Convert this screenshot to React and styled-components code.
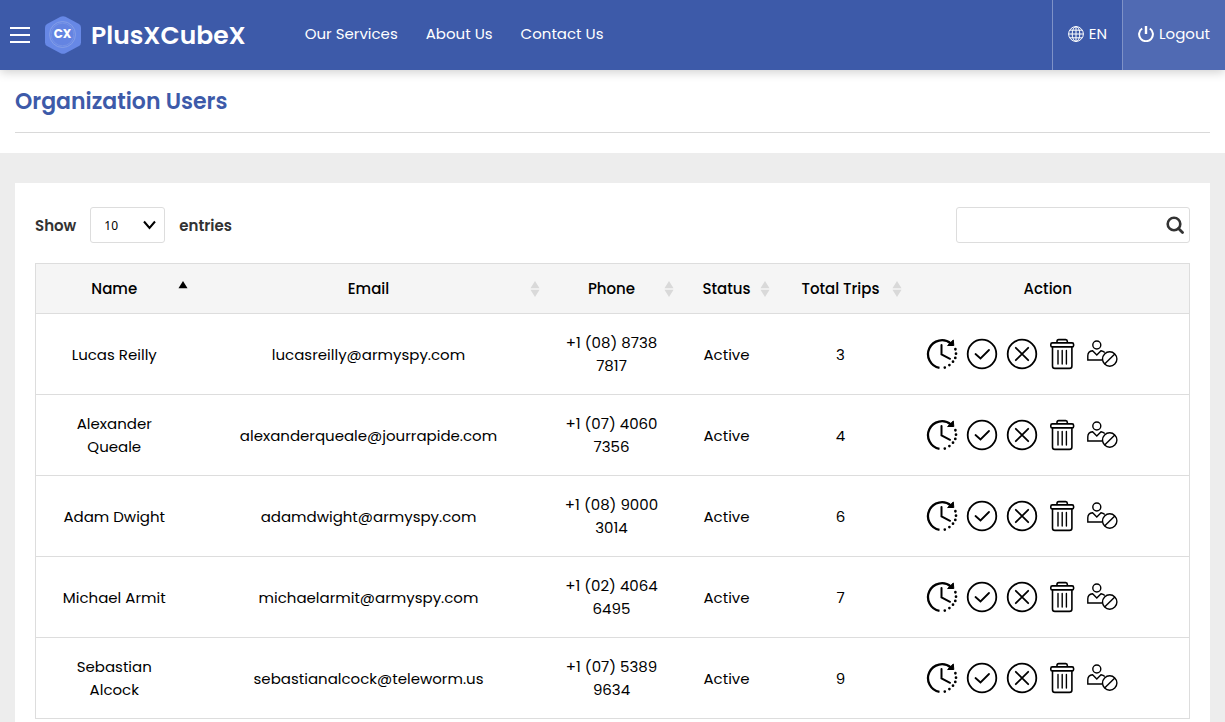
import { useState } from "react";
import styled, { createGlobalStyle } from "styled-components";

const GlobalStyle = createGlobalStyle`
  * {
    box-sizing: border-box;
  }
  body {
    margin: 0;
    background-color: #ededed;
    color: #000;
    font-family: Poppins, Inter, "Open Sans", sans-serif;
    font-size: 15px;
    line-height: 23px;
  }
  button, input {
    font: inherit;
    color: inherit;
  }
`;

const Header = styled.header`
  position: relative;
  display: flex;
  align-items: center;
  height: 70px;
  padding-left: 10px;
  background-color: #3d5aa9;
  color: white;
  box-shadow: 0 2px 10px rgba(0, 0, 0, 0.2);
`;
const MenuButton = styled.button`
  display: flex;
  flex-direction: column;
  gap: 5px;
  width: 20px;
  padding: 0;
  border: none;
  background: none;
  cursor: pointer;
`;
const MenuLine = styled.span`
  width: 100%;
  height: 2px;
  background-color: white;
`;
const Brand = styled.a`
  display: flex;
  align-items: center;
  gap: 10px;
  margin-left: 15px;
  color: white;
  font-size: 25px;
  font-weight: 600;
  text-decoration: none;
`;
const Nav = styled.nav`
  display: flex;
  gap: 28px;
  margin-left: 59px;
  padding-bottom: 3px;
`;
const NavLink = styled.a`
  color: white;
  text-decoration: none;
`;
const HeaderActions = styled.div`
  display: flex;
  align-self: stretch;
  margin-left: auto;
`;
const HeaderButton = styled.button`
  display: flex;
  align-items: center;
  gap: 5px;
  padding: 0 15px 3px;
  border: none;
  border-left: 1px solid #7f92c7;
  background-color: ${(props) => (props.$filled ? "#506ab3" : "transparent")};
  cursor: pointer;
`;

const TitleBar = styled.div`
  padding: 0 15px 20px;
  background-color: white;
`;
const Title = styled.h1`
  margin: 0;
  padding: 16px 0 15px;
  border-bottom: 1px solid #d9d9d9;
  color: #3d5aa9;
  font-size: 22px;
  font-weight: 600;
  line-height: 31px;
`;

const Card = styled.main`
  margin: 30px 15px;
  padding: 24px 20px;
  background-color: white;
`;
const Controls = styled.div`
  display: flex;
  align-items: center;
  justify-content: space-between;
  margin-bottom: 20px;
`;
const LengthLabel = styled.label`
  display: flex;
  align-items: center;
  gap: 14px;
  color: #333;
  font-weight: 600;
`;
const SelectBox = styled.span`
  position: relative;
  display: flex;
`;
const Select = styled.select`
  appearance: none;
  width: 75px;
  height: 36px;
  padding: 0 13px;
  border: 1px solid #ddd;
  border-radius: 3px;
  background-color: white;
  color: #000;
  font-family: "Noto Sans", sans-serif;
  font-size: 12px;
`;
const SelectArrow = styled.svg`
  position: absolute;
  top: 13px;
  right: 9px;
  pointer-events: none;
`;
const SearchBox = styled.div`
  position: relative;
  width: 234px;
`;
const SearchInput = styled.input`
  display: block;
  width: 100%;
  height: 36px;
  padding: 0 34px 0 12px;
  border: 1px solid #ddd;
  border-radius: 3px;
`;
const SearchIcon = styled.svg`
  position: absolute;
  top: 9px;
  right: 6px;
  pointer-events: none;
`;

const Table = styled.table`
  width: 100%;
  table-layout: fixed;
  border-collapse: collapse;
  border: 1px solid #ddd;
  text-align: center;
`;
const Col = styled.col`
  width: ${(props) => props.$width};
`;
const HeadRow = styled.tr`
  height: 50px;
  background-color: #f5f5f5;
`;
const HeadCell = styled.th`
  position: relative;
  padding: 0;
  font-weight: 500;
`;
const SortButton = styled.button`
  width: 100%;
  padding: 13px 0;
  border: none;
  background: none;
  cursor: pointer;
`;
const SortIcon = styled.svg`
  position: absolute;
  top: 17px;
  right: 5px;
`;
const Row = styled.tr`
  height: 81px;
  border-top: 1px solid #ddd;
`;
const Cell = styled.td`
  padding: 17px 20px;
`;
const Actions = styled.div`
  display: flex;
  gap: 10px;
`;
const IconButton = styled.button`
  width: 30px;
  height: 30px;
  padding: 0;
  border: none;
  background: none;
  cursor: pointer;

  svg {
    display: block;
    overflow: visible;
  }
`;

const columns = [
  { name: "Name", width: "157px" },
  { name: "Email", width: "auto" },
  { name: "Phone", width: "134px" },
  { name: "Status", width: "96px" },
  { name: "Total Trips", width: "132px" },
];

const users = [
  { name: "Lucas Reilly", email: "lucasreilly@armyspy.com", phone: "+1 (08) 8738 7817", trips: 3 },
  { name: "Alexander Queale", email: "alexanderqueale@jourrapide.com", phone: "+1 (07) 4060 7356", trips: 4 },
  { name: "Adam Dwight", email: "adamdwight@armyspy.com", phone: "+1 (08) 9000 3014", trips: 6 },
  { name: "Michael Armit", email: "michaelarmit@armyspy.com", phone: "+1 (02) 4064 6495", trips: 7 },
  { name: "Sebastian Alcock", email: "sebastianalcock@teleworm.us", phone: "+1 (07) 5389 9634", trips: 9 },
];

const Logo = () => (
  <svg width="36" height="38" viewBox="0 0 36 38">
    <path
      d="M15.5 .8Q18-.5 20.500 .8L34 8Q36 9.200 36 11.500V26.500Q36 28.800 34 30L20.500 37.200Q18 38.500 15.500 37.200L2 30Q0 28.800 0 26.500V11.500Q0 9.200 2 8Z"
      fill="#6788e6"
    />
    <circle cx="17.500" cy="18.500" r="13" fill="none" stroke="#8ca3e6" strokeWidth="0.800" />
    <circle cx="17.500" cy="18.500" r="11.300" fill="#6484e2" stroke="#829be4" strokeWidth="0.600" />
    <text x="17.500" y="22" textAnchor="middle" fill="white" fontSize="12" fontWeight="700">
      CX
    </text>
  </svg>
);

const Globe = () => (
  <svg width="16" height="16" viewBox="0 0 16 16" fill="none" stroke="currentColor">
    <circle cx="8" cy="8" r="7.400" />
    <ellipse cx="8" cy="8" rx="3.800" ry="7.400" />
    <path d="M8 .6v14.800M.6 8h14.800M2 4.200h12M2 11.800h12" />
  </svg>
);

const Power = () => (
  <svg width="16" height="16" viewBox="0 0 16 16" fill="none" stroke="currentColor" strokeWidth="2">
    <path d="M4.200 2.500A6.900 6.900 0 1 0 11.800 2.500" />
    <path d="M8 0v8" strokeWidth="2.400" />
  </svg>
);

const SortArrows = ({ active }) => (
  <SortIcon width="10" height="16" viewBox="0 0 10 16" fill={active ? "#000" : "#d9d9d9"}>
    <path d="M5 0l4.500 7.200h-9z" />
    {!active && <path d="M5 16L.5 8.800h9z" />}
  </SortIcon>
);

const HistoryIcon = () => (
  <svg width="30" height="30" viewBox="0 0 30 30" fill="none" stroke="#000">
    <path d="M12.500 28.800A13.900 13.900 0 1 1 24 4.600" strokeWidth="2.300" />
    <path d="M26.300 1L26.800 6.500 20.600 6.500z" fill="#000" strokeLinejoin="round" />
    <path
      d="M28.400 10.200v.1M29 14.600v.1M28.300 18.800v.1M26 22.600v.1M22.400 26v.1M17.800 28.500v.1"
      strokeWidth="2.700"
      strokeLinecap="round"
    />
    <path d="M14.500 6v9.300l8.500 4.500" strokeWidth="2" strokeLinecap="round" />
  </svg>
);

const ApproveIcon = () => (
  <svg width="30" height="30" viewBox="0 0 30 30" fill="none" stroke="#000" strokeWidth="1.800">
    <circle cx="15" cy="15" r="14.300" />
    <path d="M8.500 15l5 4.500 8.500-8.500" strokeLinecap="round" />
  </svg>
);

const RejectIcon = () => (
  <svg width="30" height="30" viewBox="0 0 30 30" fill="none" stroke="#000" strokeWidth="1.800">
    <circle cx="15" cy="15" r="14.300" />
    <path d="M8.800 8.800l12.400 12.400M21.200 8.800L8.800 21.200" strokeLinecap="round" />
  </svg>
);

const TrashIcon = () => (
  <svg width="30" height="30" viewBox="0 0 30 30" fill="none" stroke="#000" strokeWidth="1.600">
    <rect x="3.800" y="3.900" width="22.800" height="4" rx="1.500" />
    <path d="M10 3.900V2.300Q10 .6 11.700 .6h7Q20.300 .6 20.300 2.300v1.600" />
    <path d="M5.500 7.900V27Q5.500 29.400 7.900 29.400H22.500Q24.900 29.400 24.900 27V7.900" />
    <path d="M11 11.500v13.500M15.200 11.500v13.500M19.400 11.500v13.500" strokeWidth="1.400" strokeLinecap="round" />
  </svg>
);

const BlockUserIcon = () => (
  <svg width="30" height="30" viewBox="0 0 30 30" fill="none" stroke="#000" strokeWidth="1.400">
    <circle cx="9.800" cy="6" r="4" />
    <path d="M15 21H.8V16.800Q.8 12.300 5.600 11.700L9.800 16 14 11.700Q16.300 12 17.800 13.500" />
    <circle cx="22.700" cy="20" r="7.200" />
    <path d="M17.600 25.100L27.800 14.900" />
  </svg>
);

const rowActions = [
  { label: "Trip history", Icon: HistoryIcon },
  { label: "Approve", Icon: ApproveIcon },
  { label: "Reject", Icon: RejectIcon },
  { label: "Delete", Icon: TrashIcon },
  { label: "Block user", Icon: BlockUserIcon },
];

const App = () => {
  const [search, setSearch] = useState("");
  const rows = users.filter((user) =>
    `${user.name} ${user.email}`.toLowerCase().includes(search.toLowerCase())
  );

  return (
    <>
      <GlobalStyle />
      <Header>
        <MenuButton aria-label="Menu">
          <MenuLine />
          <MenuLine />
          <MenuLine />
        </MenuButton>
        <Brand href="#">
          <Logo />
          PlusXCubeX
        </Brand>
        <Nav>
          <NavLink href="#">Our Services</NavLink>
          <NavLink href="#">About Us</NavLink>
          <NavLink href="#">Contact Us</NavLink>
        </Nav>
        <HeaderActions>
          <HeaderButton>
            <Globe />
            EN
          </HeaderButton>
          <HeaderButton $filled>
            <Power />
            Logout
          </HeaderButton>
        </HeaderActions>
      </Header>
      <TitleBar>
        <Title>Organization Users</Title>
      </TitleBar>
      <Card>
        <Controls>
          <LengthLabel>
            Show
            <SelectBox>
              <Select>
                <option>10</option>
              </Select>
              <SelectArrow width="13" height="10" viewBox="0 0 13 10" fill="none" stroke="#000" strokeWidth="2">
                <path d="M1 1.500l5.500 6.500L12 1.500" />
              </SelectArrow>
            </SelectBox>
            entries
          </LengthLabel>
          <SearchBox>
            <SearchInput
              type="text"
              aria-label="Search"
              value={search}
              onChange={(e) => setSearch(e.target.value)}
            />
            <SearchIcon width="18" height="18" viewBox="0 0 18 18" fill="none" stroke="#333">
              <circle cx="8" cy="8" r="6.300" strokeWidth="2.600" />
              <path d="M12.500 12.500l4 4" strokeWidth="2.800" strokeLinecap="round" />
            </SearchIcon>
          </SearchBox>
        </Controls>
        <Table>
          <colgroup>
            {columns.map((column) => (
              <Col key={column.name} $width={column.width} />
            ))}
            <Col $width="283px" />
          </colgroup>
          <thead>
            <HeadRow>
              {columns.map((column, index) => (
                <HeadCell key={column.name}>
                  <SortButton>
                    {column.name}
                    <SortArrows active={index === 0} />
                  </SortButton>
                </HeadCell>
              ))}
              <HeadCell>Action</HeadCell>
            </HeadRow>
          </thead>
          <tbody>
            {rows.map((user) => (
              <Row key={user.email}>
                <Cell>{user.name}</Cell>
                <Cell>{user.email}</Cell>
                <Cell>{user.phone}</Cell>
                <Cell>Active</Cell>
                <Cell>{user.trips}</Cell>
                <Cell>
                  <Actions>
                    {rowActions.map(({ label, Icon }) => (
                      <IconButton key={label} aria-label={label}>
                        <Icon />
                      </IconButton>
                    ))}
                  </Actions>
                </Cell>
              </Row>
            ))}
          </tbody>
        </Table>
      </Card>
    </>
  );
};

export default App;
